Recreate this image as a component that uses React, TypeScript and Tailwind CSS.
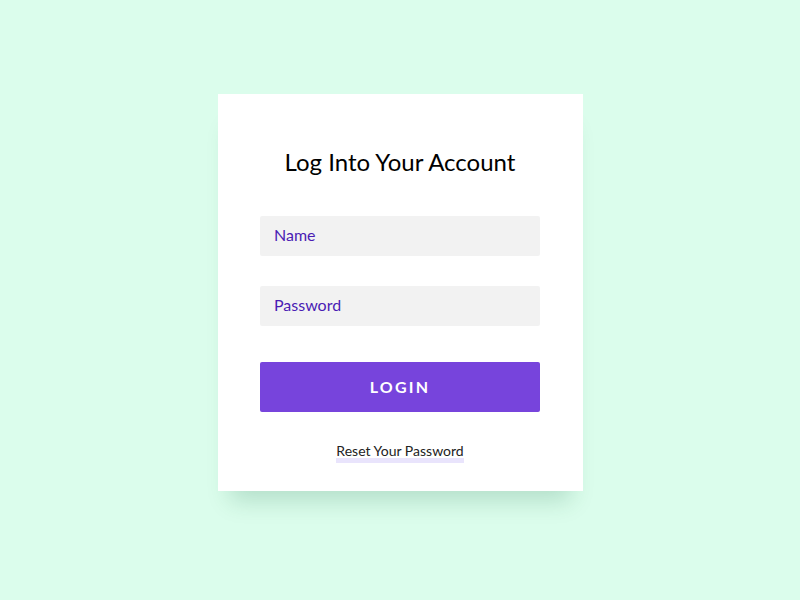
export default function App() {
  return (
    <div className="min-h-screen w-full bg-[#dbfdec] flex justify-center pt-[94px] font-['Lato',sans-serif]">
      <div className="w-[365px] h-[397px] bg-white shadow-[0_22px_22px_-12px_rgba(0,90,50,0.18)] flex flex-col items-center">
        <h1 className="mt-[52px] text-[24px] leading-[32px] text-black">Log Into Your Account</h1>
        <input
          className="mt-[38px] w-[280px] h-[40px] rounded-[2px] bg-[#f2f2f2] px-[14px] pb-[3px] text-[16px] outline-none placeholder:text-[#4a1cb4]"
          placeholder="Name"
        />
        <input
          type="password"
          className="mt-[30px] w-[280px] h-[40px] rounded-[2px] bg-[#f2f2f2] px-[14px] pb-[3px] text-[16px] outline-none placeholder:text-[#4a1cb4]"
          placeholder="Password"
        />
        <button className="mt-[36px] w-[280px] h-[50px] rounded-[2px] bg-[#7744dc] text-white text-[16px] font-bold tracking-[0.14em]">
          LOGIN
        </button>
        <a className="mt-[32px] text-[14px] leading-[14px] text-[#222] border-b-[5px] border-[#e9e4fc]">Reset Your Password</a>
      </div>
    </div>
  );
}
